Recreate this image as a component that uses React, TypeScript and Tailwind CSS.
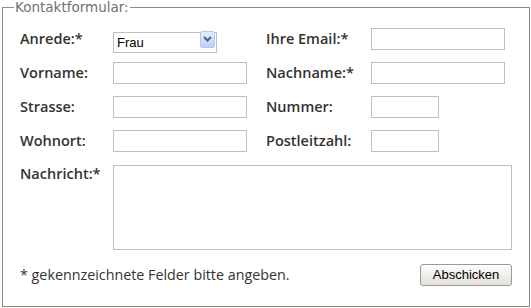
import React from "react";

const labelCls = "text-[14.5px] font-semibold text-[#333333] leading-[22px]";
const inputCls = "h-[22px] border border-[#bfbfbf] bg-white outline-none px-1 text-[13px]";

const Field: React.FC<{ w: string }> = ({ w }) => (
    <input type="text" className={`${inputCls} ${w}`} />
);

const App: React.FC = () => {
    return (
        <div className="w-[531px] h-[308px] bg-white pl-[2px]" style={{ fontFamily: '"Open Sans", sans-serif' }}>
            <fieldset className="w-[527px] h-[307px] border border-[#8c8c84] px-[17px] pb-0">
                <legend
                    className="ml-[-6px] px-[1px] text-[13.5px] leading-[15px] text-[#707070]"
                    style={{ fontFamily: '"DejaVu Sans", sans-serif' }}
                >
                    Kontaktformular:
                </legend>

                <div className="grid grid-cols-[93px_153px_105px_134px] gap-y-[12px] items-center mt-[13px]">
                    <span className={labelCls}>Anrede:*</span>
                    <div className="relative w-[104px] h-[21px]">
                        <select
                            defaultValue="Frau"
                            className="w-full h-full appearance-none border border-[#bfbfbf] bg-white pl-[3px] text-[13px] leading-[19px] text-black outline-none"
                            style={{ fontFamily: '"Liberation Sans", Arial, sans-serif' }}
                        >
                            <option>Frau</option>
                            <option>Herr</option>
                        </select>
                        <div className="pointer-events-none absolute right-[2px] top-[2px] w-[15px] h-[17px] rounded-[2px] border border-[#b4c7ee] bg-gradient-to-b from-[#e4ecfd] to-[#bcd0f6] flex items-center justify-center">
                            <svg width="9" height="6" viewBox="0 0 9 6">
                                <path d="M1 1 L4.5 4.5 L8 1" fill="none" stroke="#4d6185" strokeWidth="2" />
                            </svg>
                        </div>
                    </div>
                    <span className={labelCls}>Ihre Email:*</span>
                    <Field w="w-[134px]" />

                    <span className={labelCls}>Vorname:</span>
                    <Field w="w-[134px]" />
                    <span className={labelCls}>Nachname:*</span>
                    <Field w="w-[134px]" />

                    <span className={labelCls}>Strasse:</span>
                    <Field w="w-[134px]" />
                    <span className={labelCls}>Nummer:</span>
                    <Field w="w-[68px]" />

                    <span className={labelCls}>Wohnort:</span>
                    <Field w="w-[134px]" />
                    <span className={labelCls}>Postleitzahl:</span>
                    <Field w="w-[68px]" />

                    <span className={`${labelCls} self-start -mt-[1px]`}>Nachricht:*</span>
                    <textarea className="col-span-3 w-[399px] h-[85px] border border-[#bfbfbf] bg-white outline-none resize-none mt-[1px]" />
                </div>

                <div className="flex items-center justify-between mt-[14px] w-[492px]">
                    <span className="text-[14.3px] text-[#333333]">* gekennzeichnete Felder bitte angeben.</span>
                    <button
                        className="w-[92px] h-[22px] rounded-[3px] border border-[#9a9a9a] bg-gradient-to-b from-[#fdfdfd] to-[#e4e1d9] text-[13px] text-black"
                        style={{ fontFamily: '"Liberation Sans", Arial, sans-serif' }}
                    >
                        Abschicken
                    </button>
                </div>
            </fieldset>
        </div>
    );
};

export default App;
